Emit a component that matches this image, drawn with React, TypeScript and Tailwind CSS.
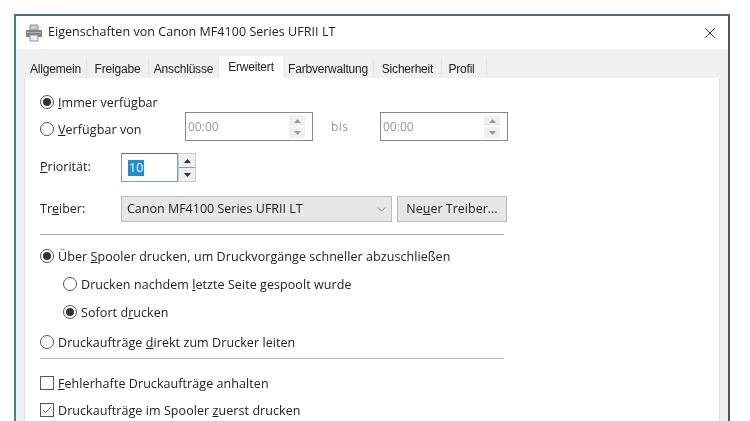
import { Check, ChevronDown, X } from 'lucide-react'
import type { ReactNode } from 'react'

const tabs = [
  { label: 'Allgemein', w: 'w-[62px]' },
  { label: 'Freigabe', w: 'w-[62px]' },
  { label: 'Anschlüsse', w: 'w-[70px]' },
  { label: 'Erweitert', w: 'w-[64px]', active: true },
  { label: 'Farbverwaltung', w: 'w-[91px]' },
  { label: 'Sicherheit', w: 'w-[68px]' },
  { label: 'Profil', w: 'w-[45px] pr-[5px]' },
]

function Radio({ checked = false }: { checked?: boolean }) {
  return (
    <span className="w-[14px] h-[14px] rounded-full border border-[#555] bg-white flex items-center justify-center shrink-0">
      {checked && <span className="w-[8px] h-[8px] rounded-full bg-[#333]" />}
    </span>
  )
}

function Box({ checked = false }: { checked?: boolean }) {
  return (
    <span className="w-[14px] h-[14px] border border-[#555] bg-white flex items-center justify-center shrink-0">
      {checked && <Check className="w-[12px] h-[12px] text-[#333]" strokeWidth={1.5} />}
    </span>
  )
}

function Option({ control, children, className = '' }: { control: ReactNode; children: ReactNode; className?: string }) {
  return (
    <div className={`flex items-center gap-[4px] h-[20px] ${className}`}>
      {control}
      <span className="pt-[2px] text-[12.5px] tracking-[0.07px] text-[#222]">{children}</span>
    </div>
  )
}

function Arrow({ up = false, light = false }: { up?: boolean; light?: boolean }) {
  return (
    <svg width="7" height="4" viewBox="0 0 7 4">
      <path d={up ? 'M3.5 0 7 4H0z' : 'M0 0h7L3.5 4z'} fill={light ? '#999' : '#333'} />
    </svg>
  )
}

function TimeSpin() {
  return (
    <div className="w-[128px] h-[29px] border border-[#888] bg-white flex items-center justify-between pl-[2px] pr-[7px]">
      <span className="text-[12px] text-[#999]">00:00</span>
      <div className="flex flex-col gap-px w-[16px] h-[23px]">
        <span className="flex-1 bg-[#f0f0f0] flex items-center justify-center"><Arrow up light /></span>
        <span className="flex-1 bg-[#f0f0f0] flex items-center justify-center"><Arrow light /></span>
      </div>
    </div>
  )
}

export default function App() {
  return (
    <div className="h-[421px] w-[750px] overflow-hidden bg-white pt-[14px] pl-[14px] blur-[0.6px] font-['Open_Sans',sans-serif]">
      <div className="w-[716px] h-[407px] border-t-2 border-l-2 border-r-2 border-t-[#4c6b7a] border-l-[#3f7f96] border-r-[#555] bg-[#f0f0f0] flex flex-col">
        {/* Title bar */}
        <div className="h-[33px] bg-white flex items-center pl-[9px] pr-[9px] shrink-0">
          <svg width="18" height="18" viewBox="0 0 18 18" className="shrink-0">
            <path d="M5 1h8v5H5z" fill="#c8cdd2" stroke="#8a8f94" />
            <path d="M1 6h16v7H1z" fill="#7d858c" />
            <path d="M2 8h14v1H2z" fill="#aab0b5" />
            <path d="M5 11h8v6H5z" fill="#eef0f2" stroke="#8a8f94" />
          </svg>
          <span className="ml-[5px] text-[12.5px] tracking-[0.05px] text-[#222]">Eigenschaften von Canon MF4100 Series UFRII LT</span>
          <X className="ml-auto w-[18px] h-[18px] text-[#222]" strokeWidth={1.2} />
        </div>

        {/* Tabs */}
        <div className="flex items-end h-[29px] pl-[9px] shrink-0 font-['Liberation_Sans',sans-serif] text-[12px] text-[#222]">
          {tabs.map(t => (
            <div
              key={t.label}
              className={`${t.w} flex items-center justify-center ${
                t.active
                  ? 'h-[22px] bg-white tracking-[-0.2px]'
                  : 'h-[20px] pt-[2px] bg-[#f0f0f0] border-r border-[#e4e4e4] tracking-[-0.2px]'
              }`}
            >
              {t.label}
            </div>
          ))}
        </div>

        {/* Panel */}
        <div className="flex-1 ml-[8px] mr-[8px] bg-white border-l border-r border-[#e2e2e2] pl-[15px] pt-[14px] flex flex-col min-h-0">
          <Option control={<Radio checked />}><span className="underline">I</span>mmer verfügbar</Option>

          <div className="flex items-center h-[29px]">
            <Option control={<Radio />} className="w-[145px] mt-[5px]"><span className="underline">V</span>erfügbar von</Option>
            <TimeSpin />
            <span className="w-[67px] pl-[18px] text-[12px] text-[#999] tracking-[0.5px]">bis</span>
            <TimeSpin />
          </div>

          <div className="flex items-center h-[29px] mt-[12px]">
            <span className="w-[81px] text-[12.5px] text-[#222]"><span className="underline">P</span>riorität:</span>
            <div className="w-[57px] h-[29px] border border-[#7a9db0] border-t-[#666] bg-white flex items-center pl-[6px]">
              <span className="bg-[#1f8fd0] text-white text-[12.5px] leading-[16px] px-px">10</span>
            </div>
            <div className="w-[18px] h-[29px] border border-[#ccc] bg-[#f0f0f0] flex flex-col">
              <span className="flex-1 flex items-center justify-center border-b border-[#999]"><Arrow up /></span>
              <span className="flex-1 flex items-center justify-center"><Arrow /></span>
            </div>
          </div>

          <div className="flex items-center h-[26px] mt-[14px]">
            <span className="w-[81px] text-[12.5px] text-[#222]">Tr<span className="underline">e</span>iber:</span>
            <div className="w-[271px] h-[26px] border border-[#bbb] bg-[#e6e6e6] flex items-center pl-[5px] pr-[3px]">
              <span className="text-[12.5px] text-[#222]">Canon MF4100 Series UFRII LT</span>
              <ChevronDown className="ml-auto w-[13px] h-[13px] text-[#555]" strokeWidth={1.3} />
            </div>
            <div className="ml-[5px] w-[110px] h-[26px] border border-[#bbb] bg-[#e6e6e6] flex items-center justify-center text-[12.5px] text-[#222]">
              Ne<span className="underline">u</span>er Treiber...
            </div>
          </div>

          <div className="w-[464px] h-px bg-[#aaa] mt-[12px] shrink-0" />

          <Option control={<Radio checked />} className="mt-[11px]">Über <span className="underline">S</span>pooler drucken, um Druckvorgänge schneller abzuschließen</Option>
          <Option control={<Radio />} className="mt-[8px] ml-[23px]">Drucken nachdem <span className="underline">l</span>etzte Seite gespoolt wurde</Option>
          <Option control={<Radio checked />} className="mt-[8px] ml-[23px]">Sofort d<span className="underline">r</span>ucken</Option>
          <Option control={<Radio />} className="mt-[10px]">Druckaufträge <span className="underline">d</span>irekt zum Drucker leiten</Option>

          <div className="w-[464px] h-px bg-[#bbb] mt-[6px] shrink-0" />

          <Option control={<Box />} className="mt-[14px]"><span className="underline">F</span>ehlerhafte Druckaufträge anhalten</Option>
          <Option control={<Box checked />} className="mt-[7px]">Druckaufträge im Spooler <span className="underline">z</span>uerst drucken</Option>
        </div>
      </div>
    </div>
  )
}
